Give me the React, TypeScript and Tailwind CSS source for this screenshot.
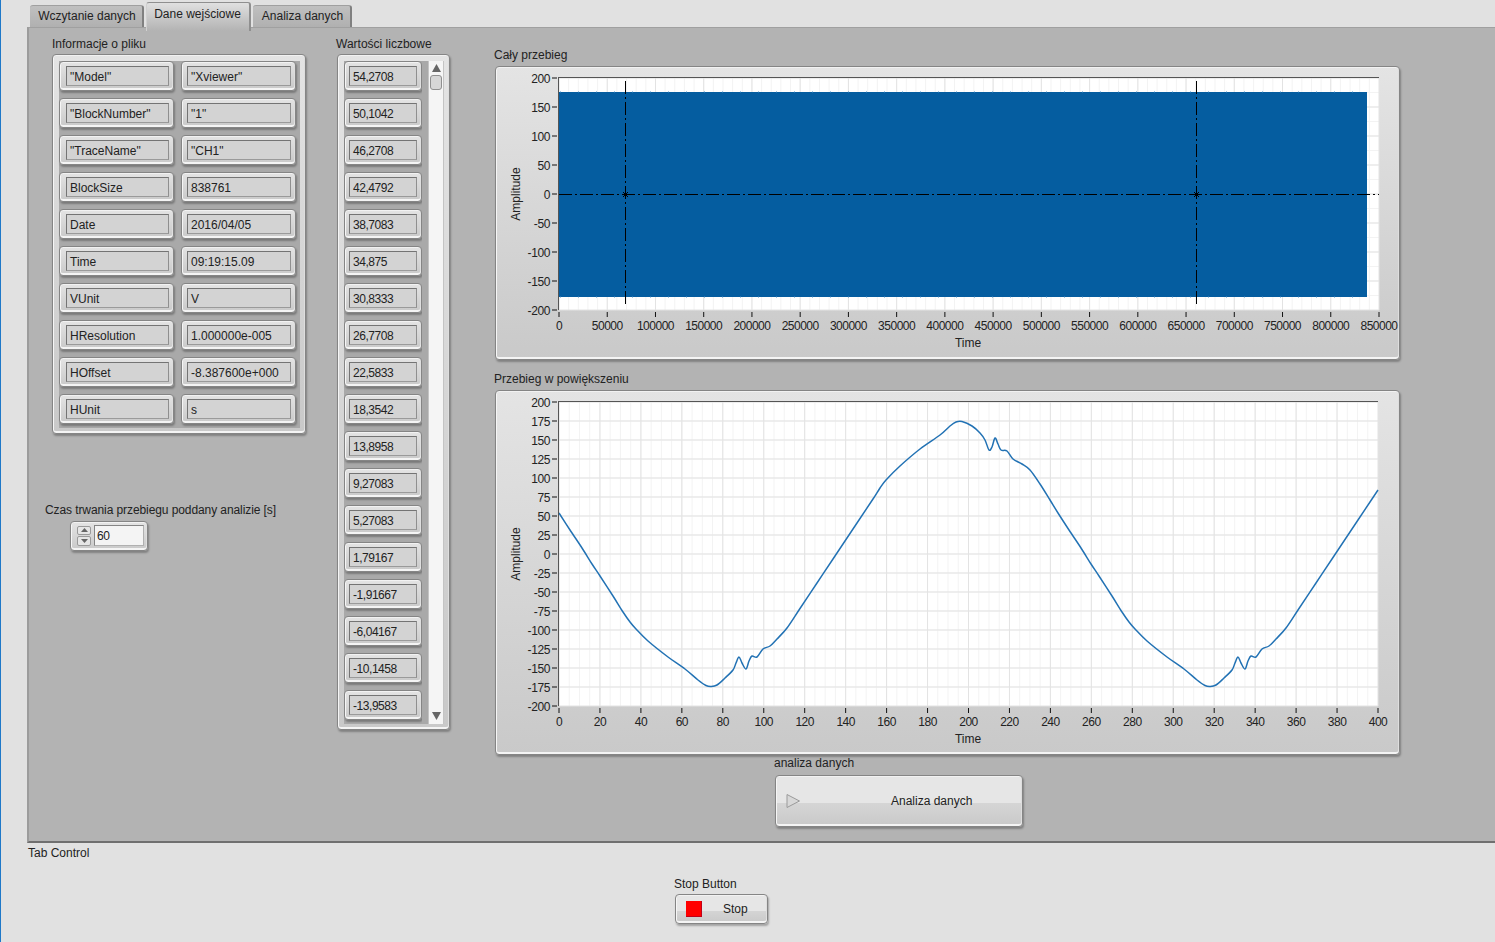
const fileInfo = [
  ['"Model"', '"Xviewer"'],
  ['"BlockNumber"', '"1"'],
  ['"TraceName"', '"CH1"'],
  ["BlockSize", "838761"],
  ["Date", "2016/04/05"],
  ["Time", "09:19:15.09"],
  ["VUnit", "V"],
  ["HResolution", "1.000000e-005"],
  ["HOffset", "-8.387600e+000"],
  ["HUnit", "s"],
];

const values = [
  "54,2708", "50,1042", "46,2708", "42,4792", "38,7083", "34,875", "30,8333", "26,7708", "22,5833",
  "18,3542", "13,8958", "9,27083", "5,27083", "1,79167", "-1,91667", "-6,04167", "-10,1458", "-13,9583",
];

// traced in page pixels; the second period is the first one moved 499px right
const falling = [
  [559, 513], [570, 530], [582, 548], [592, 564], [600, 576], [613, 596], [623, 612], [630, 622], [636, 629],
  [648, 641], [668, 657], [685, 669], [698, 680], [706, 685.5], [711, 686.5],
];
const rising = [
  [717, 685], [725, 678], [733, 670], [736, 663], [739, 657], [742, 663], [746, 669], [749, 661], [752, 656],
  [757, 657], [763, 649], [770, 646], [777, 639], [787, 628], [800, 608.5], [817, 583], [833, 559], [858, 521.5],
  [873, 499], [880, 488], [886, 480], [900, 466], [920, 449], [940, 435], [950, 426], [956, 422], [962, 421.5],
  [972, 426], [980, 433], [985, 440], [989, 450], [992, 447], [995, 438], [998, 444], [1001, 450], [1007, 451],
  [1013, 459], [1022, 464], [1030, 470], [1040, 484], [1050, 500],
];
const curve = [
  ...falling,
  ...rising,
  ...falling.map(([x, y]) => [x + 499, y]),
  ...rising.filter(([x]) => x <= 873).map(([x, y]) => [x + 499, y]),
  [1378, 490],
];

function smoothPath(pts: number[][]) {
  let d = `M${pts[0][0]} ${pts[0][1]}`;
  for (let i = 0; i < pts.length - 1; i++) {
    const p0 = pts[Math.max(i - 1, 0)];
    const p1 = pts[i];
    const p2 = pts[i + 1];
    const p3 = pts[Math.min(i + 2, pts.length - 1)];
    const c1x = p1[0] + (p2[0] - p0[0]) / 6;
    const c1y = p1[1] + (p2[1] - p0[1]) / 6;
    const c2x = p2[0] - (p3[0] - p1[0]) / 6;
    const c2y = p2[1] - (p3[1] - p1[1]) / 6;
    d += ` C${c1x} ${c1y} ${c2x} ${c2y} ${p2[0]} ${p2[1]}`;
  }
  return d;
}

function Bevel({ className, children }: { className: string; children?: React.ReactNode }) {
  return (
    <div
      className={`rounded-[4px] border border-[#858585] bg-gradient-to-b from-[#e4e4e4] to-[#c9c9c9] shadow-[inset_0_1px_0_#f2f2f2,inset_1px_0_0_#f6f6f6,inset_0_-2px_0_#f4f4f4,inset_-1px_0_0_#dedede,1px_2px_2px_rgba(0,0,0,0.28)] ${className}`}
    >
      {children}
    </div>
  );
}

function Cell({ text, width, inner }: { text: string; width: string; inner: string }) {
  return (
    <Bevel className={`flex h-[30px] items-center pb-px ${width}`}>
      <div
        className={`h-[20px] truncate border border-t-[#747474] border-l-[#747474] border-r-[#8f8f8f] border-b-[#9a9a9a] bg-[#d3d3d3] pl-[3px] leading-[21px] ${inner}`}
      >
        {text}
      </div>
    </Bevel>
  );
}

function Tab({ label, active, width }: { label: string; active?: boolean; width: string }) {
  if (active) {
    return (
      <div className={`relative z-10 -mb-[4px] mt-[2px] flex h-[29px] justify-center rounded-t-[3px] border-t border-r-2 border-[#8f8f8f] border-l border-l-[#d0d0d0] bg-gradient-to-b from-[#e0e0e0] to-[#b3b3b3] pr-[1px] pt-[3px] leading-[16px] ${width}`}>
        {label}
      </div>
    );
  }
  return (
    <div className={`mt-[5px] flex h-[22px] justify-center rounded-t-[3px] border-t border-r-2 border-t-[#a0a0a0] border-r-[#808080] bg-gradient-to-b from-[#c0c0c0] to-[#b0b0b0] pl-[2px] pt-[2px] leading-[16px] ${width}`}>
      {label}
    </div>
  );
}

type PlotProps = {
  viewBox: string;
  top: number;
  bottom: number;
  left: number;
  right: number;
  yTicks: number[];
  yMax: number;
  xTicks: number[];
  xMax: number;
  xDiv: number;
  yDiv: number;
  tickLabelY: number;
  timeY: number;
  ampY: number;
  children?: React.ReactNode;
};

function Plot({ viewBox, top, bottom, left, right, yTicks, yMax, xTicks, xMax, xDiv, yDiv, tickLabelY, timeY, ampY, children }: PlotProps) {
  const toX = (v: number) => left + (v / xMax) * (right - left);
  const toY = (v: number) => top + ((yMax - v) / (yMax * 2)) * (bottom - top);
  const xStep = (right - left) / (xTicks.length - 1);
  const yStep = (bottom - top) / (yTicks.length - 1);
  const minorX = Array.from({ length: (xTicks.length - 1) * xDiv }, (_, i) => left + (i * xStep) / xDiv);
  const minorY = Array.from({ length: (yTicks.length - 1) * yDiv }, (_, i) => top + (i * yStep) / yDiv);
  return (
    <svg viewBox={viewBox} className="block h-full w-full">
      <rect x={left} y={top} width={right - left} height={bottom - top} fill="#ffffff" />
      {minorX.map((x) => (
        <line key={x} x1={x} x2={x} y1={top} y2={bottom} stroke="#f3f3f3" />
      ))}
      {minorY.map((y) => (
        <line key={y} x1={left} x2={right} y1={y} y2={y} stroke="#f3f3f3" />
      ))}
      {xTicks.map((t) => (
        <line key={t} x1={toX(t)} x2={toX(t)} y1={top} y2={bottom} stroke="#e3e3e3" />
      ))}
      {yTicks.map((t) => (
        <line key={t} x1={left} x2={right} y1={toY(t)} y2={toY(t)} stroke="#e3e3e3" />
      ))}
      {children}
      <line x1={left - 0.5} x2={left - 0.5} y1={top - 1} y2={bottom} stroke="#555555" />
      <line x1={left - 1} x2={right} y1={top - 0.5} y2={top - 0.5} stroke="#555555" />
      {yTicks.map((t) => (
        <g key={t}>
          <line x1={left - 7} x2={left - 2} y1={toY(t)} y2={toY(t)} stroke="#111111" />
          <text x={left - 9} y={toY(t) + 5} textAnchor="end" fontSize="12" letterSpacing="-0.4" fill="#222222">
            {t}
          </text>
        </g>
      ))}
      {xTicks.map((t) => (
        <g key={t}>
          <line x1={toX(t)} x2={toX(t)} y1={bottom + 2} y2={bottom + 7} stroke="#111111" />
          <text x={toX(t)} y={tickLabelY} textAnchor="middle" fontSize="12" letterSpacing="-0.5" fill="#222222">
            {t}
          </text>
        </g>
      ))}
      <text x={968} y={timeY} textAnchor="middle" fontSize="12" fill="#222222">
        Time
      </text>
      <text x={0} y={0} textAnchor="middle" fontSize="12" fill="#222222" transform={`translate(520 ${ampY}) rotate(-90)`}>
        Amplitude
      </text>
    </svg>
  );
}

export default function App() {
  const bigX = Array.from({ length: 18 }, (_, i) => i * 50000);
  const bigY = Array.from({ length: 9 }, (_, i) => 200 - i * 50);
  const zoomX = Array.from({ length: 21 }, (_, i) => i * 20);
  const zoomY = Array.from({ length: 17 }, (_, i) => 200 - i * 25);

  return (
    <div className="relative h-[942px] w-[1495px] overflow-hidden border-l border-l-[#1f78c8] bg-[#e1e1e1] font-['Liberation_Sans',sans-serif] text-[12px] text-[#222222]">
      {/* tab strip */}
      <div className="flex h-[27px] gap-[2px] pl-[29px]">
        <Tab label="Wczytanie danych" width="w-[114px]" />
        <Tab label="Dane wejściowe" active width="w-[105px]" />
        <Tab label="Analiza danych" width="w-[99px]" />
      </div>

      {/* tab page */}
      <div className="ml-[26px] flex h-[816px] border-t border-l-2 border-b-2 border-t-[#a0a0a0] border-l-[#9c9c9c] border-b-[#6f6f6f] bg-[#b3b3b3] pl-[16px] pt-[9px]">
        <div className="w-[291px] shrink-0">
          <div className="ml-[7px] h-[14px] leading-[14px]">Informacje o pliku</div>
          <Bevel className="ml-[7px] mt-[3px] h-[380px] w-[254px] p-[6px]">
            <div className="flex h-[367px] w-[241px] flex-col gap-[7px] bg-[#a9a9a9]">
              {fileInfo.map(([name, val]) => (
                <div key={name} className="flex gap-[7px]">
                  <Cell text={name} width="w-[115px] pl-[6px]" inner="w-[103px]" />
                  <Cell text={val} width="w-[115px] pl-[5px]" inner="w-[104px]" />
                </div>
              ))}
            </div>
          </Bevel>
          <div className="mt-[68px] h-[14px] whitespace-nowrap leading-[16px] tracking-[-0.09px]">Czas trwania przebiegu poddany analizie [s]</div>
          <Bevel className="ml-[25px] mt-[5px] flex h-[30px] w-[78px] items-center gap-[3px] pb-px pl-[6px]">
            <div className="flex h-[20px] w-[14px] flex-col gap-px">
              <div className="flex h-[10px] items-center justify-center rounded-[2px] border border-[#9a9a9a] bg-[#e6e6e6]">
                <svg width="7" height="4" viewBox="0 0 7 4"><path d="M3.5 0 7 4H0z" fill="#666666" /></svg>
              </div>
              <div className="flex h-[10px] items-center justify-center rounded-[2px] border border-[#9a9a9a] bg-[#e6e6e6]">
                <svg width="7" height="4" viewBox="0 0 7 4"><path d="M0 0h7L3.5 4z" fill="#666666" /></svg>
              </div>
            </div>
            <div className="h-[21px] w-[50px] border border-t-[#858585] border-l-[#858585] border-r-[#b0b0b0] border-b-[#b0b0b0] bg-[#f4f4f4] pl-[2px] leading-[20px] tracking-[-0.4px]">60</div>
          </Bevel>
        </div>

        <div className="w-[158px] shrink-0">
          <div className="h-[14px] leading-[14px]">Wartości liczbowe</div>
          <Bevel className="ml-px mt-[3px] h-[676px] w-[113px] p-[6px]">
            <div className="flex h-[663px] w-[100px] bg-[#a9a9a9]">
              <div className="flex w-[78px] flex-col gap-[7px] overflow-hidden tracking-[-0.45px]">
                {values.map((v) => (
                  <div key={v} className="shrink-0">
                    <Cell text={v} width="w-[78px] pl-[4px]" inner="w-[68px]" />
                  </div>
                ))}
              </div>
              <div className="ml-[6px] flex w-[16px] flex-col items-center border-x border-[#c4c4c4] bg-[#f5f5f5] pt-[3px]">
                <svg width="9" height="8" viewBox="0 0 9 8"><path d="M4.5 0 9 8H0z" fill="#666666" /></svg>
                <div className="mt-[3px] h-[15px] w-[12px] rounded-[3px] border border-[#8f8f8f] bg-[#d6d6d6]" />
                <div className="flex-1" />
                <svg className="mb-[4px]" width="9" height="8" viewBox="0 0 9 8"><path d="M0 0h9L4.500 8z" fill="#666666" /></svg>
              </div>
            </div>
          </Bevel>
        </div>

        <div className="flex-1">
          <div className="mt-[11px] h-[14px] leading-[14px]">Cały przebieg</div>
          <Bevel className="ml-px mt-[4px] h-[294px] w-[905px]">
            <Plot
              viewBox="496 67 903 292"
              top={78}
              bottom={310}
              left={559}
              right={1379}
              yTicks={bigY}
              yMax={200}
              xTicks={bigX}
              xMax={850000}
              xDiv={5}
              yDiv={2}
              tickLabelY={330}
              timeY={347}
              ampY={194}
            >
              <rect x={559} y={92} width={808} height={205} fill="#055da0" />
              <path d="M560 297h807M560 92h807" stroke="#4a8fc4" strokeDasharray="1 17" />
              <g stroke="#000000" fill="none">
                <line x1={559} x2={1379} y1={194.5} y2={194.5} strokeDasharray="13 3 2 3" />
                <line x1={625.5} x2={625.5} y1={81} y2={307} strokeDasharray="13 3 2 3" />
                <line x1={1196.5} x2={1196.5} y1={81} y2={307} strokeDasharray="13 3 2 3" />
                <path d="M623 192l5 5M628 192l-5 5M1194 192l5 5M1199 192l-5 5" />
              </g>
            </Plot>
          </Bevel>
          <div className="mt-[12px] h-[14px] leading-[14px]">Przebieg w powiększeniu</div>
          <Bevel className="ml-px mt-[4px] h-[365px] w-[905px]">
            <Plot
              viewBox="496 391 903 363"
              top={402}
              bottom={706}
              left={559}
              right={1378}
              yTicks={zoomY}
              yMax={200}
              xTicks={zoomX}
              xMax={400}
              xDiv={4}
              yDiv={1}
              tickLabelY={726}
              timeY={743}
              ampY={554}
            >
              <path d={smoothPath(curve)} fill="none" stroke="#2272b4" strokeWidth="1.5" strokeLinejoin="round" />
            </Plot>
          </Bevel>
          <div className="ml-[280px] h-[14px] leading-[16px]">analiza danych</div>
          <Bevel className="relative ml-[281px] mt-[6px] flex h-[52px] w-[248px] items-center overflow-hidden">
            <div className="absolute inset-x-[1px] top-[1px] h-[26px] bg-[#e6e6e6]" />
            <svg className="relative ml-[10px]" width="15" height="16" viewBox="0 0 15 16">
              <path d="M1 1.5 13.5 8 1 14.5z" fill="#d8d8d8" stroke="#9a9a9a" />
            </svg>
            <span className="relative ml-[90px]">Analiza danych</span>
          </Bevel>
        </div>
      </div>

      <div className="ml-[27px] mt-[3px] h-[14px] leading-[14px]">Tab Control</div>
      <div className="ml-[673px] mt-[16px] h-[14px] leading-[16px]">Stop Button</div>
      <Bevel className="relative ml-[674px] mt-[4px] flex h-[30px] w-[93px] items-center overflow-hidden">
        <div className="absolute inset-x-[1px] top-[1px] h-[15px] bg-[#e6e6e6]" />
        <div className="relative ml-[10px] h-[16px] w-[16px] border-r border-b border-[#c00018] bg-[#ff0000]" />
        <span className="relative ml-[21px]">Stop</span>
      </Bevel>
    </div>
  );
}
